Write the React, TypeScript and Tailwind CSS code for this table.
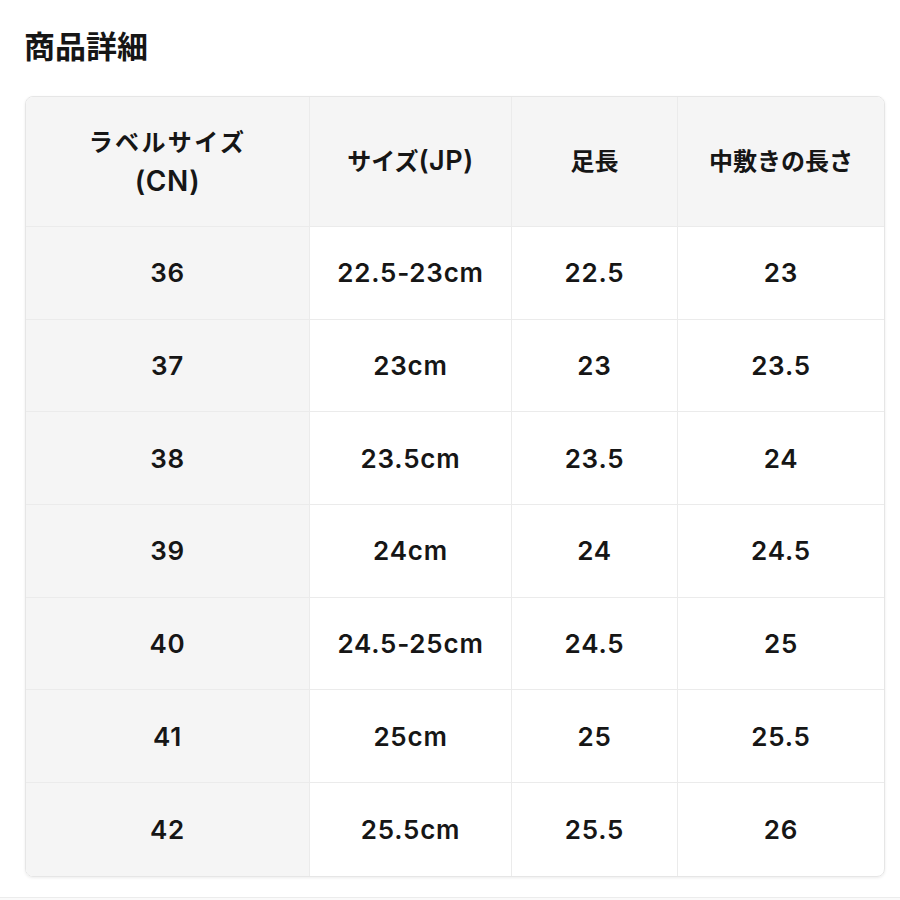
const rows = [
  ['36', '22.5-23cm', '22.5', '23'],
  ['37', '23cm', '23', '23.5'],
  ['38', '23.5cm', '23.5', '24'],
  ['39', '24cm', '24', '24.5'],
  ['40', '24.5-25cm', '24.5', '25'],
  ['41', '25cm', '25', '25.5'],
  ['42', '25.5cm', '25.5', '26'],
];

const font = { fontFamily: 'Inter, "Noto Sans CJK JP", sans-serif' };

export default function App() {
  return (
    <div className="relative h-[900px] w-[900px] overflow-hidden bg-white text-[#161616]" style={font}>
      <h1 className="absolute left-[24px] top-[28px] text-[31px] font-bold leading-[38px]">商品詳細</h1>
      <div className="absolute left-[25px] top-[96px] w-[860px] overflow-hidden rounded-[8px] border border-[#e6e6e6] shadow-[0_1px_3px_rgba(0,0,0,0.08)]">
        <div className="grid grid-cols-[284px_202px_166px_176px_1fr]">
          {/* header */}
          <div className="flex h-[130px] flex-col items-center justify-center border-b border-r border-[#ebebeb] bg-[#f5f5f5] text-[24px] font-semibold leading-[39px]">
            <span className="tracking-[0.1em]">ラベルサイズ</span>
            <span className="text-[28px] tracking-[0.02em]">(CN)</span>
          </div>
          <div className="flex h-[130px] items-center justify-center border-b border-r border-[#ebebeb] bg-[#f5f5f5] text-[24px] font-semibold">
            サイズ<span className="text-[27px] tracking-[0.02em]">(JP)</span>
          </div>
          <div className="flex h-[130px] items-center justify-center border-b border-r border-[#ebebeb] bg-[#f5f5f5] text-[24px] font-semibold">
            足長
          </div>
          <div className="col-span-2 flex h-[130px] items-center justify-center border-b border-[#ebebeb] bg-[#f5f5f5] text-[24px] font-semibold">
            中敷きの長さ
          </div>
          {rows.map((r, i) => (
            <div key={r[0]} className="contents">
              <div
                className={`flex h-[92.7px] items-center justify-center border-r border-[#ebebeb] bg-[#f5f5f5] text-[26px] font-semibold tracking-[0.03em] ${
                  i < rows.length - 1 ? 'border-b' : ''
                }`}
              >
                {r[0]}
              </div>
              <div
                className={`flex h-[92.7px] items-center justify-center border-r border-[#ebebeb] text-[26px] font-semibold tracking-[0.03em] ${
                  i < rows.length - 1 ? 'border-b' : ''
                }`}
              >
                {r[1]}
              </div>
              <div
                className={`flex h-[92.7px] items-center justify-center border-r border-[#ebebeb] text-[26px] font-semibold tracking-[0.03em] ${
                  i < rows.length - 1 ? 'border-b' : ''
                }`}
              >
                {r[2]}
              </div>
              <div
                className={`col-span-2 flex h-[92.7px] items-center justify-center border-[#ebebeb] text-[26px] font-semibold tracking-[0.03em] ${
                  i < rows.length - 1 ? 'border-b' : ''
                }`}
              >
                {r[3]}
              </div>
            </div>
          ))}
        </div>
      </div>
      <div className="absolute bottom-0 left-0 h-[3px] w-full border-t border-[#ececec] bg-[#fafafa]" />
    </div>
  );
}
